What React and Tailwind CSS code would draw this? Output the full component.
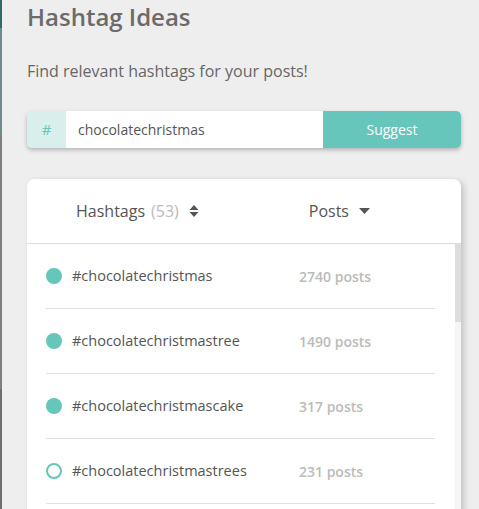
import React from 'react';

const rows = [
  { tag: '#chocolatechristmas', posts: 2740, filled: true },
  { tag: '#chocolatechristmastree', posts: 1490, filled: true },
  { tag: '#chocolatechristmascake', posts: 317, filled: true },
  { tag: '#chocolatechristmastrees', posts: 231, filled: false },
];

const App = () => {
  return (
    <div className="flex h-[509px] w-[479px] overflow-hidden bg-[#eeeeee] font-['Open_Sans',sans-serif]">
      {/* edge of the page behind */}
      <div className="flex w-[2px] flex-col">
        <div className="h-[28px] bg-[#2f6a68]" />
        <div className="h-[108px] bg-[#6f8a88]" />
        <div className="flex-1 bg-[#7e7e7e]" />
        <div className="h-[120px] bg-[#6e6e6e]" />
      </div>

      <div className="flex-1 pl-[25px] pr-[18px]">
        <h1 className="mt-[1px] text-[24px] leading-[32px] font-semibold text-[#6b6b6b]">Hashtag Ideas</h1>
        <p className="mt-[27px] text-[16px] leading-[22px] text-[#666]">Find relevant hashtags for your posts!</p>

        <div className="mt-[29px] flex h-[37px] overflow-hidden rounded-[5px] shadow-[0_2px_4px_rgba(0,0,0,0.25)]">
          <div className="flex w-[39px] items-center justify-center bg-[#d8efec] text-[15px] text-[#66c6bb]">#</div>
          <div className="flex flex-1 items-center bg-white pl-[12px] text-[14px] text-[#555]">chocolatechristmas</div>
          <button className="w-[138px] bg-[#66c6bb] text-[14px] text-white">Suggest</button>
        </div>

        <div className="mt-[31px] flex h-[400px] flex-col rounded-t-[8px] bg-white shadow-[3px_2px_6px_rgba(0,0,0,0.18)]">
          <div className="flex h-[65px] items-center border-b border-[#dcdcdc] text-[16px] text-[#555]">
            <div className="ml-[49px] flex items-center">
              <span>Hashtags</span>
              <span className="ml-[6px] text-[#bbb]">(53)</span>
              <svg className="ml-[10px]" width="10" height="14" viewBox="0 0 10 14">
                <path d="M5 1 L9.5 6 H0.5 Z" fill="#555" />
                <path d="M5 13 L9.5 8 H0.5 Z" fill="#555" />
              </svg>
            </div>
            <div className="ml-[110px] flex items-center">
              <span>Posts</span>
              <svg className="ml-[10px]" width="11" height="6" viewBox="0 0 11 6">
                <path d="M0 0 H11 L5.5 6 Z" fill="#555" />
              </svg>
            </div>
          </div>

          <div className="flex flex-1">
            <div className="flex-1 pl-[19px] pr-[20px]">
              {rows.map((r) => (
                <div key={r.tag} className="flex h-[65px] items-center border-b border-[#e0e0e0]">
                  {r.filled ? (
                    <div className="h-[16px] w-[16px] rounded-full bg-[#66c6bb]" />
                  ) : (
                    <div className="h-[16px] w-[16px] rounded-full border-2 border-[#66c6bb]" />
                  )}
                  <span className="ml-[10px] w-[227px] text-[14.5px] text-[#555]">{r.tag}</span>
                  <span className="text-[14px] font-semibold text-[#bbb]">{r.posts} posts</span>
                </div>
              ))}
            </div>
            <div className="flex w-[6px] flex-col bg-[#f5f5f5]">
              <div className="h-[78px] bg-[#dddddd]" />
            </div>
          </div>
        </div>
      </div>
    </div>
  );
};

export default App;
